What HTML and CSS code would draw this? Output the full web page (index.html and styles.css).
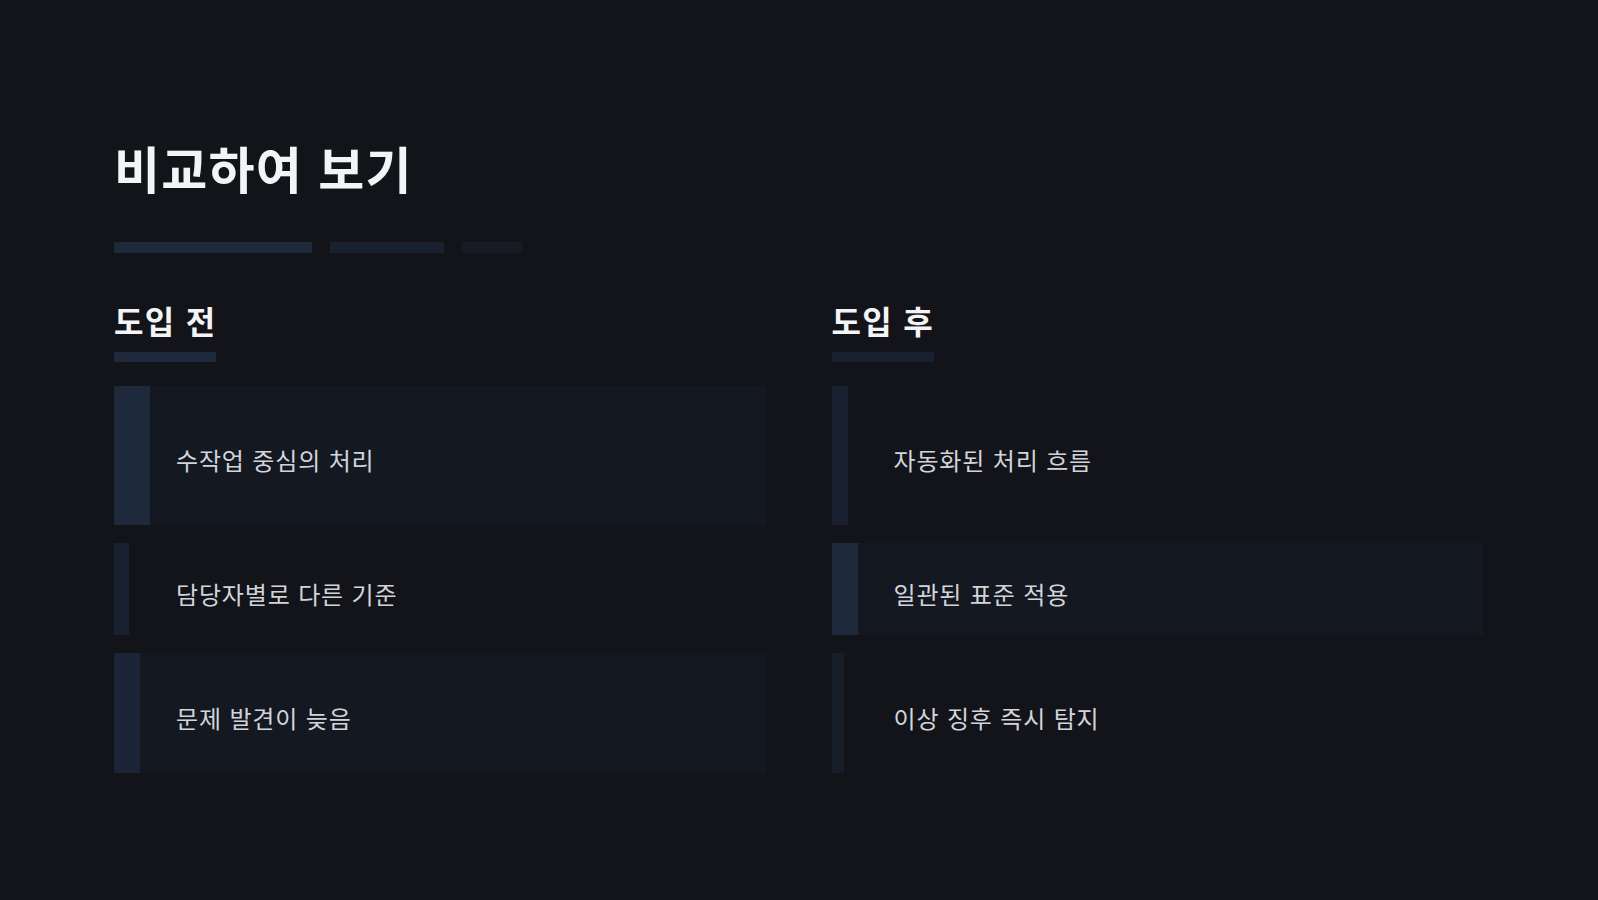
FILE: index.html
```html
<!DOCTYPE html>
<html lang="ko">
<head>
    <meta charset="UTF-8">
    <meta name="viewport" content="width=device-width, initial-scale=1.0">
    <title>비교하여 보기</title>
    <link rel="stylesheet" href="styles.css">
</head>
<body>

    <div class="page">
        <h1 class="title">비교하여 보기</h1>

        <div class="bars">
            <span class="bar bar-long"></span>
            <span class="bar bar-mid"></span>
            <span class="bar bar-short"></span>
        </div>

        <div class="compare">
            <!-- 도입 전 -->
            <div class="col-head">
                <h2>도입 전</h2>
                <span class="underline"></span>
            </div>
            <div class="item fill accent-36 tone-a">수작업 중심의 처리</div>
            <div class="item accent-15 tone-c">담당자별로 다른 기준</div>
            <div class="item fill accent-26 tone-b">문제 발견이 늦음</div>

            <!-- 도입 후 -->
            <div class="col-head">
                <h2>도입 후</h2>
                <span class="underline dim"></span>
            </div>
            <div class="item accent-16 tone-c">자동화된 처리 흐름</div>
            <div class="item fill accent-26 tone-a">일관된 표준 적용</div>
            <div class="item accent-12 tone-d">이상 징후 즉시 탐지</div>
        </div>
    </div>

</body>
</html>
```

FILE: styles.css
```css
body {
    margin: 0;
    background-color: #131419;
    font-family: "Noto Sans CJK KR", "Noto Sans", sans-serif;
}
.page {
    padding: 138px 115px 0 114px;
}
.title {
    margin: 0;
    font-size: 50px;
    font-weight: 700;
    line-height: 58px;
    letter-spacing: 0.025em;
    color: #f3f4f6;
}
.bars {
    display: flex;
    gap: 18px;
    margin-top: 46px;
}
.bar {
    height: 11px;
}
.bar-long {
    width: 198px;
    background-color: #1e293b;
}
.bar-mid {
    width: 114px;
    background-color: #19202e;
}
.bar-short {
    width: 60px;
    background-color: #161b25;
}
.compare {
    display: grid;
    grid-template-columns: 1fr 1fr;
    grid-template-rows: auto 139px 92px 120px;
    grid-auto-flow: column;
    column-gap: 66px;
    row-gap: 18px;
    margin-top: 47px;
}
.col-head {
    margin-bottom: 6px;
}
.col-head h2 {
    margin: 0;
    font-size: 32px;
    font-weight: 700;
    line-height: 40px;
    letter-spacing: 0.04em;
    color: #f3f4f6;
}
.underline {
    display: block;
    width: 102px;
    height: 10px;
    margin-top: 12px;
    background-color: #1e293b;
}
.underline.dim {
    background-color: #192030;
}
.item {
    display: flex;
    align-items: center;
    padding-top: 8px;
    font-size: 24px;
    letter-spacing: 0.035em;
    color: #d1d5db;
    border-left: 16px solid #1a2130;
}
.item.fill {
    background-color: #141821;
}
.accent-36 { border-left-width: 36px; padding-left: 26px; }
.accent-26 { border-left-width: 26px; padding-left: 36px; }
.accent-16 { border-left-width: 16px; padding-left: 46px; }
.accent-15 { border-left-width: 15px; padding-left: 47px; }
.accent-12 { border-left-width: 12px; padding-left: 50px; }
.tone-a { border-left-color: #1e293b; }
.tone-b { border-left-color: #1c2537; }
.tone-c { border-left-color: #192030; }
.tone-d { border-left-color: #171d29; }
```
